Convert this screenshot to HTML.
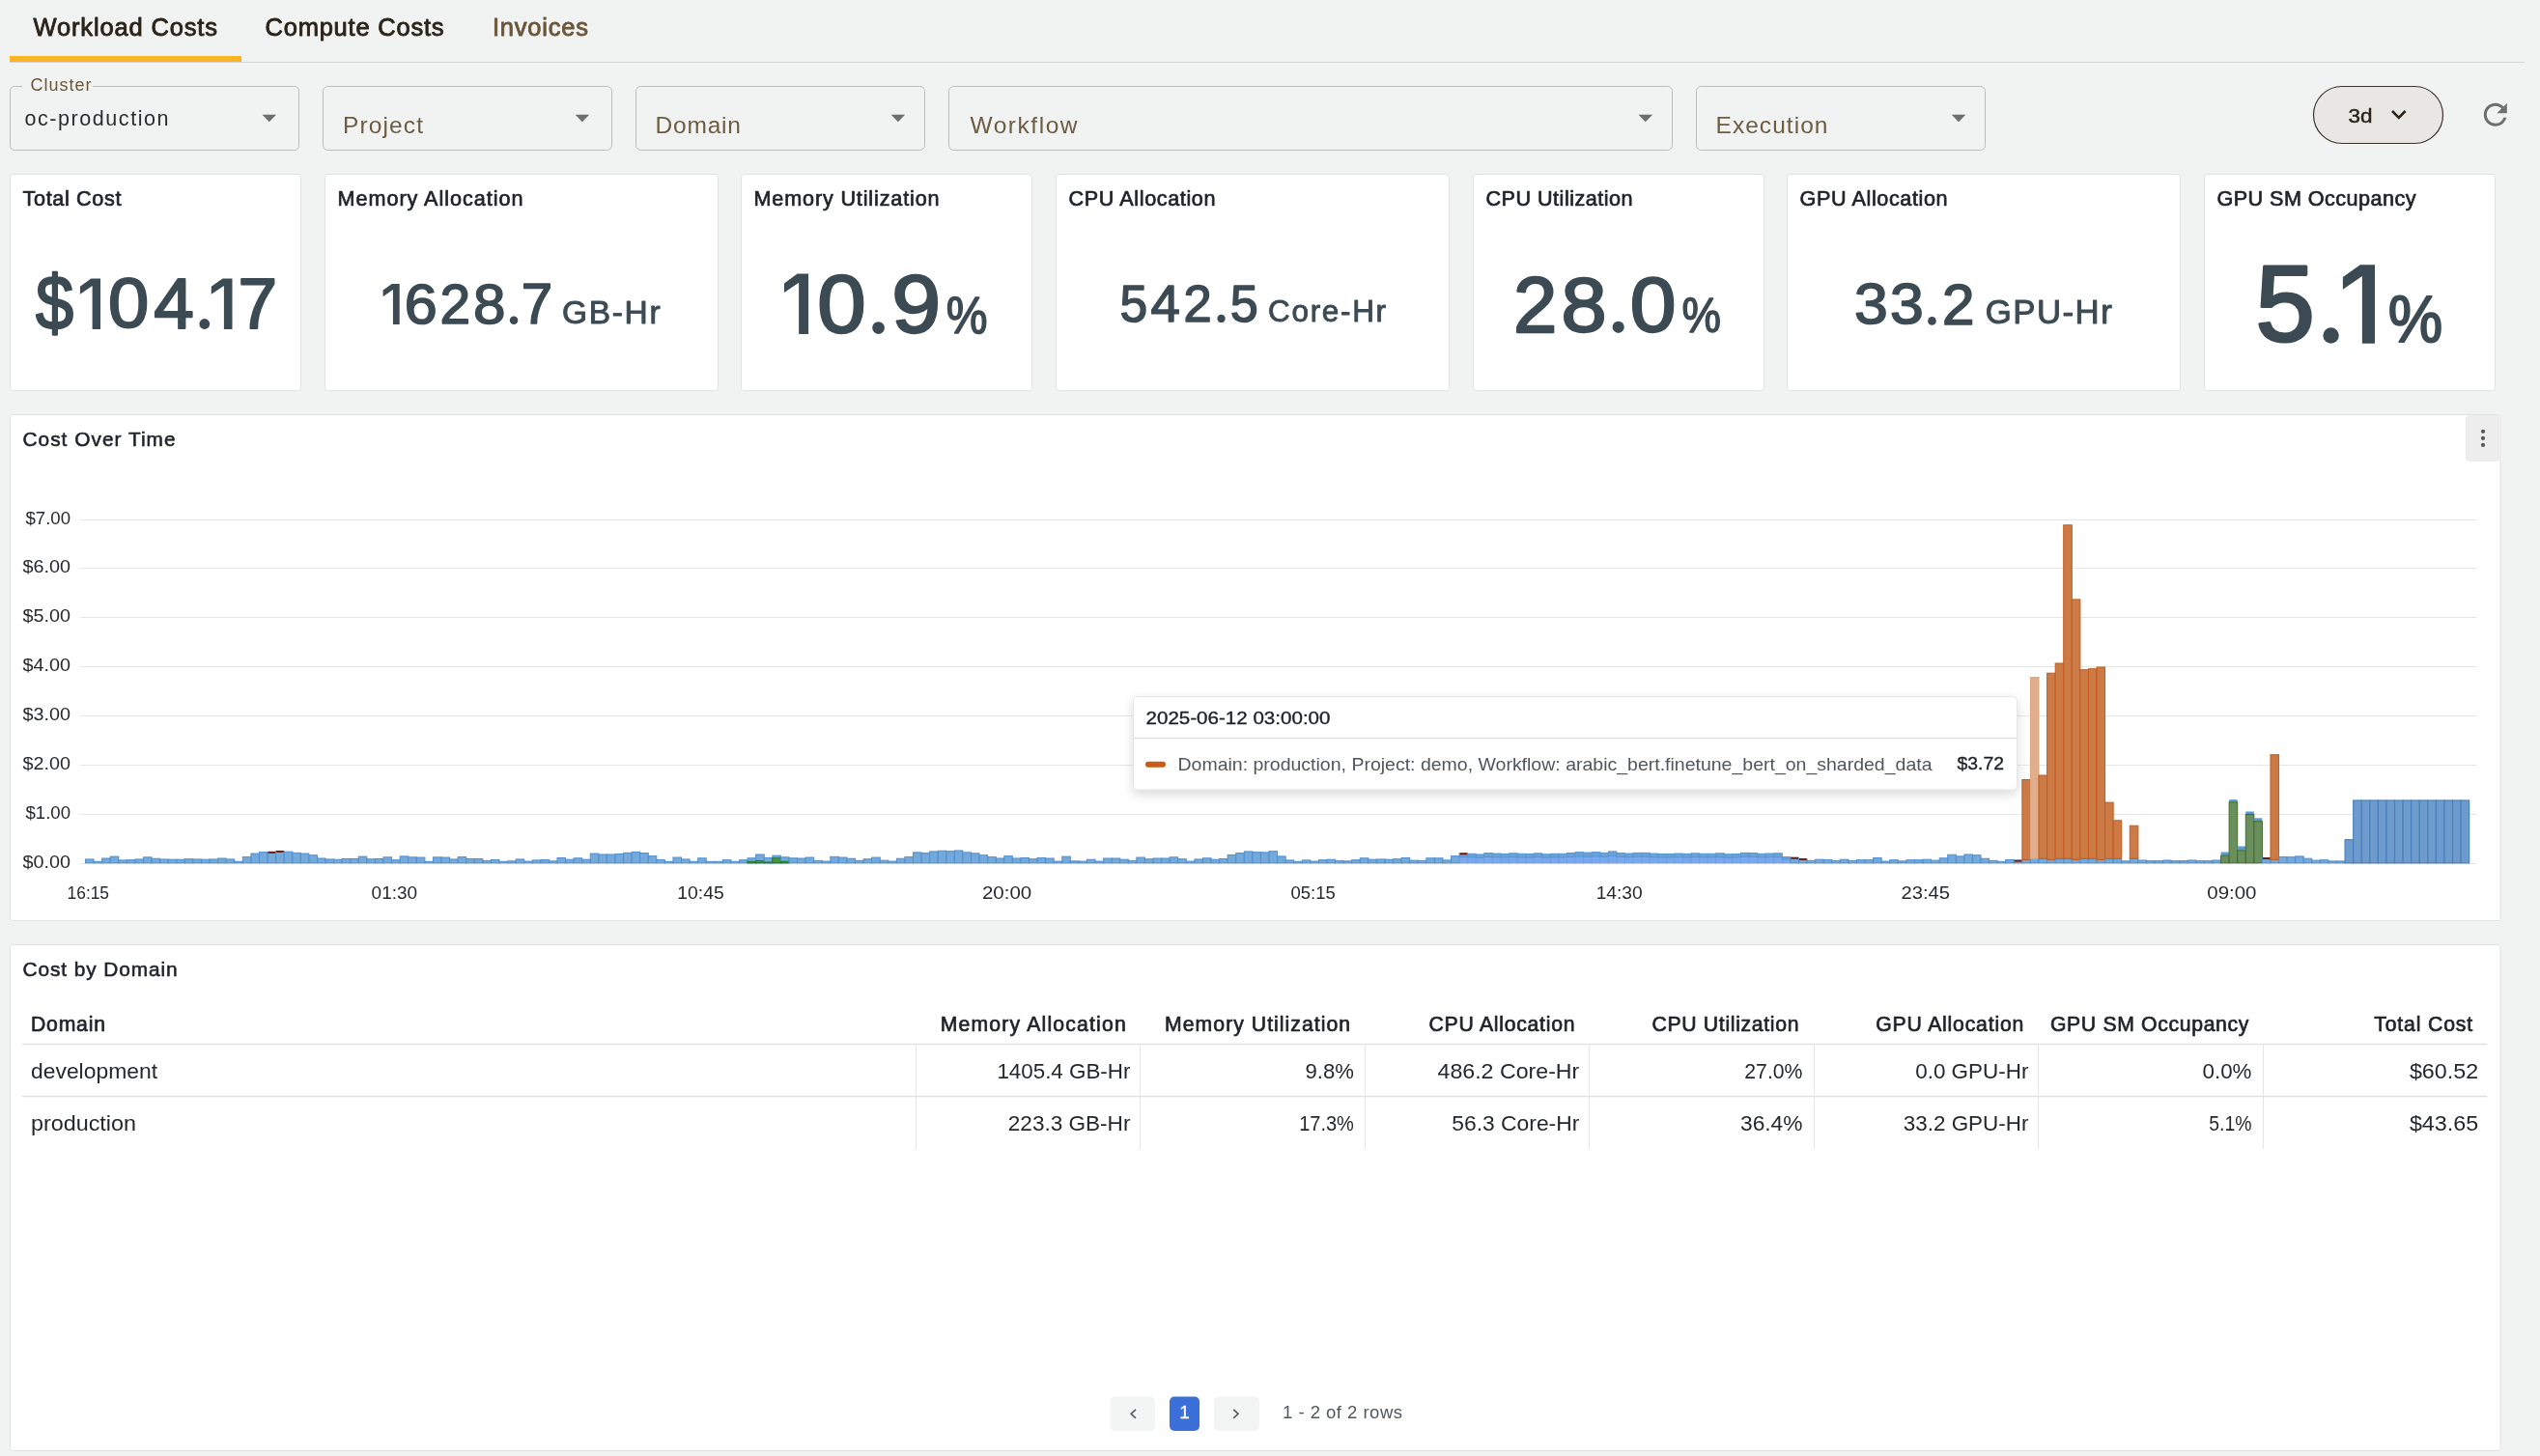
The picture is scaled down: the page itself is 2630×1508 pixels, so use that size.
<!DOCTYPE html>
<html><head><meta charset="utf-8"><title>Workload Costs</title>
<style>
html,body{margin:0;padding:0;background:#f1f3f2;width:2630px;height:1508px;overflow:hidden}
svg{display:block;font-family:"Liberation Sans", sans-serif;will-change:transform}
</style></head>
<body>
<svg width="2630" height="1508" viewBox="0 0 2630 1508">
<text x="34.5" y="36.5" font-size="25.5" fill="#2b2319" text-anchor="start" font-weight="normal" stroke="#2b2319" stroke-width="0.85" stroke-linejoin="round" textLength="190.5" lengthAdjust="spacing">Workload Costs</text>
<text x="274.5" y="36.5" font-size="25.5" fill="#2b2319" text-anchor="start" font-weight="normal" stroke="#2b2319" stroke-width="0.85" stroke-linejoin="round" textLength="185" lengthAdjust="spacing">Compute Costs</text>
<text x="510" y="36.5" font-size="25.5" fill="#6b5638" text-anchor="start" font-weight="normal" stroke="#6b5638" stroke-width="0.85" stroke-linejoin="round" textLength="99" lengthAdjust="spacing">Invoices</text>
<line x1="10" y1="64.5" x2="2614" y2="64.5" stroke="#d3d6d6" stroke-width="1"/>
<rect x="10" y="58" width="240" height="6" rx="0" fill="#fbb424"/>
<path d="M23 89.5 H15.5 Q10.5 89.5 10.5 94.5 V150.5 Q10.5 155.5 15.5 155.5 H304.5 Q309.5 155.5 309.5 150.5 V94.5 Q309.5 89.5 304.5 89.5 H96" fill="none" stroke="#b9bcbb" stroke-width="1"/>
<text x="31.5" y="94" font-size="18" fill="#6b5638" text-anchor="start" font-weight="normal" textLength="63" lengthAdjust="spacing">Cluster</text>
<text x="25.5" y="129.7" font-size="21.5" fill="#2a2d30" text-anchor="start" font-weight="normal" textLength="149" lengthAdjust="spacing">oc-production</text>
<path d="M271.5 118.8 L286.1 118.8 L278.8 126.3 Z" fill="#6e6e6e"/>
<rect x="334.5" y="89.5" width="299" height="66" rx="5" fill="none" stroke="#b9bcbb" stroke-width="1"/>
<text x="355.0" y="138.0" font-size="24.5" fill="#6e5c40" text-anchor="start" font-weight="normal" textLength="83" lengthAdjust="spacing">Project</text>
<path d="M595.6 118.8 L610.2 118.8 L602.9 126.3 Z" fill="#6e6e6e"/>
<rect x="658.5" y="89.5" width="299" height="66" rx="5" fill="none" stroke="#b9bcbb" stroke-width="1"/>
<text x="678.5" y="138.0" font-size="24.5" fill="#6e5c40" text-anchor="start" font-weight="normal" textLength="88.5" lengthAdjust="spacing">Domain</text>
<path d="M922.6 118.8 L937.2 118.8 L929.9 126.3 Z" fill="#6e6e6e"/>
<rect x="982.5" y="89.5" width="749" height="66" rx="5" fill="none" stroke="#b9bcbb" stroke-width="1"/>
<text x="1004.5" y="138.0" font-size="24.5" fill="#6e5c40" text-anchor="start" font-weight="normal" textLength="111" lengthAdjust="spacing">Workflow</text>
<path d="M1696.5 118.8 L1711.1 118.8 L1703.8 126.3 Z" fill="#6e6e6e"/>
<rect x="1756.5" y="89.5" width="299" height="66" rx="5" fill="none" stroke="#b9bcbb" stroke-width="1"/>
<text x="1776.5" y="138.0" font-size="24.5" fill="#6e5c40" text-anchor="start" font-weight="normal" textLength="116" lengthAdjust="spacing">Execution</text>
<path d="M2020.7 118.8 L2035.3 118.8 L2028.0 126.3 Z" fill="#6e6e6e"/>
<rect x="2395.5" y="89.5" width="134" height="59" rx="29.5" fill="#e9e7e3" stroke="#3a3229" stroke-width="1.2"/>
<text x="2431.5" y="127.3" font-size="21" fill="#2b2319" text-anchor="start" font-weight="normal" stroke="#2b2319" stroke-width="0.45" stroke-linejoin="round" textLength="25" lengthAdjust="spacingAndGlyphs">3d</text>
<path d="M2477 115 L2483.8 121.8 L2490.6 115" fill="none" stroke="#2b2319" stroke-width="2.6"/>
<g transform="translate(2565.8,100.85) scale(1.5)" fill="#6e6e6e"><path d="M17.65 6.35A7.958 7.958 0 0 0 12 4c-4.42 0-7.99 3.58-7.99 8s3.57 8 7.99 8c3.73 0 6.84-2.55 7.73-6h-2.08A5.99 5.99 0 0 1 12 18c-3.31 0-6-2.69-6-6s2.69-6 6-6c1.66 0 3.14.69 4.22 1.78L13 11h7V4l-2.35 2.35z"/></g>
<rect x="10.5" y="180.5" width="301" height="224" rx="3" fill="#ffffff" stroke="#e0e2e5" stroke-width="1"/>
<text x="23.5" y="213.2" font-size="21.6" fill="#1f2328" text-anchor="start" font-weight="normal" stroke="#1f2328" stroke-width="0.7" stroke-linejoin="round" textLength="102" lengthAdjust="spacing">Total Cost</text>
<rect x="336.5" y="180.5" width="407" height="224" rx="3" fill="#ffffff" stroke="#e0e2e5" stroke-width="1"/>
<text x="349.5" y="213.2" font-size="21.6" fill="#1f2328" text-anchor="start" font-weight="normal" stroke="#1f2328" stroke-width="0.7" stroke-linejoin="round" textLength="192" lengthAdjust="spacing">Memory Allocation</text>
<rect x="767.5" y="180.5" width="301" height="224" rx="3" fill="#ffffff" stroke="#e0e2e5" stroke-width="1"/>
<text x="780.5" y="213.2" font-size="21.6" fill="#1f2328" text-anchor="start" font-weight="normal" stroke="#1f2328" stroke-width="0.7" stroke-linejoin="round" textLength="192" lengthAdjust="spacing">Memory Utilization</text>
<rect x="1093.5" y="180.5" width="407" height="224" rx="3" fill="#ffffff" stroke="#e0e2e5" stroke-width="1"/>
<text x="1106.5" y="213.2" font-size="21.6" fill="#1f2328" text-anchor="start" font-weight="normal" stroke="#1f2328" stroke-width="0.7" stroke-linejoin="round" textLength="152" lengthAdjust="spacing">CPU Allocation</text>
<rect x="1525.5" y="180.5" width="301" height="224" rx="3" fill="#ffffff" stroke="#e0e2e5" stroke-width="1"/>
<text x="1538.5" y="213.2" font-size="21.6" fill="#1f2328" text-anchor="start" font-weight="normal" stroke="#1f2328" stroke-width="0.7" stroke-linejoin="round" textLength="152" lengthAdjust="spacing">CPU Utilization</text>
<rect x="1850.5" y="180.5" width="407" height="224" rx="3" fill="#ffffff" stroke="#e0e2e5" stroke-width="1"/>
<text x="1863.5" y="213.2" font-size="21.6" fill="#1f2328" text-anchor="start" font-weight="normal" stroke="#1f2328" stroke-width="0.7" stroke-linejoin="round" textLength="153" lengthAdjust="spacing">GPU Allocation</text>
<rect x="2282.5" y="180.5" width="301" height="224" rx="3" fill="#ffffff" stroke="#e0e2e5" stroke-width="1"/>
<text x="2295.5" y="213.2" font-size="21.6" fill="#1f2328" text-anchor="start" font-weight="normal" stroke="#1f2328" stroke-width="0.7" stroke-linejoin="round" textLength="206" lengthAdjust="spacing">GPU SM Occupancy</text>
<text x="0" y="0" font-size="80.23" fill="#3c4a53" stroke="#3c4a53" stroke-width="2.25" stroke-linejoin="round" transform="translate(36.93,341.31) scale(0.8767,1)">$</text>
<path d="M94.33 288.40 L104.00 288.40 L104.00 340.90 L95.62 340.90 L95.62 296.01 L82.90 304.81 L82.90 296.64Z" fill="#3c4a53"/>
<text x="0" y="0" font-size="71.33" fill="#3c4a53" stroke="#3c4a53" stroke-width="2.00" stroke-linejoin="round" transform="translate(111.90,339.20) scale(1.0638,1)">0</text>
<text x="0" y="0" font-size="73.33" fill="#3c4a53" stroke="#3c4a53" stroke-width="2.05" stroke-linejoin="round" transform="translate(159.13,339.87) scale(1.0179,1)">4</text>
<circle cx="211.80" cy="335.50" r="5.40" fill="#3c4a53"/>
<path d="M230.55 288.40 L240.50 288.40 L240.50 340.90 L231.89 340.90 L231.89 296.01 L218.80 304.81 L218.80 296.64Z" fill="#3c4a53"/>
<text x="0" y="0" font-size="73.33" fill="#3c4a53" stroke="#3c4a53" stroke-width="2.05" stroke-linejoin="round" transform="translate(246.38,339.87) scale(0.9947,1)">7</text>
<path d="M405.86 294.00 L413.70 294.00 L413.70 336.10 L406.91 336.10 L406.91 300.10 L396.60 307.16 L396.60 300.61Z" fill="#3c4a53"/>
<text x="0" y="0" font-size="57.20" fill="#3c4a53" stroke="#3c4a53" stroke-width="1.60" stroke-linejoin="round" transform="translate(418.75,334.74) scale(1.0680,1)">6</text>
<text x="0" y="0" font-size="57.97" fill="#3c4a53" stroke="#3c4a53" stroke-width="1.62" stroke-linejoin="round" transform="translate(455.54,335.29) scale(0.9810,1)">2</text>
<text x="0" y="0" font-size="57.20" fill="#3c4a53" stroke="#3c4a53" stroke-width="1.60" stroke-linejoin="round" transform="translate(490.03,334.74) scale(1.0513,1)">8</text>
<circle cx="532.05" cy="331.85" r="4.25" fill="#3c4a53"/>
<text x="0" y="0" font-size="58.80" fill="#3c4a53" stroke="#3c4a53" stroke-width="1.65" stroke-linejoin="round" transform="translate(539.63,335.28) scale(0.9903,1)">7</text>
<path d="M825.59 283.60 L837.10 283.60 L837.10 345.90 L827.14 345.90 L827.14 292.63 L812.00 303.07 L812.00 293.38Z" fill="#3c4a53"/>
<text x="0" y="0" font-size="84.65" fill="#3c4a53" stroke="#3c4a53" stroke-width="2.37" stroke-linejoin="round" transform="translate(846.13,343.89) scale(1.0693,1)">0</text>
<circle cx="909.55" cy="339.55" r="6.35" fill="#3c4a53"/>
<text x="0" y="0" font-size="84.65" fill="#3c4a53" stroke="#3c4a53" stroke-width="2.37" stroke-linejoin="round" transform="translate(923.29,343.89) scale(1.0803,1)">9</text>
<text x="0" y="0" font-size="53.04" fill="#3c4a53" stroke="#3c4a53" stroke-width="1.49" stroke-linejoin="round" transform="translate(979.66,345.45) scale(0.9071,1)">%</text>
<text x="0" y="0" font-size="53.32" fill="#3c4a53" stroke="#3c4a53" stroke-width="1.49" stroke-linejoin="round" transform="translate(1159.56,332.83) scale(0.9673,1)">5</text>
<text x="0" y="0" font-size="54.05" fill="#3c4a53" stroke="#3c4a53" stroke-width="1.51" stroke-linejoin="round" transform="translate(1191.41,333.34) scale(1.0087,1)">4</text>
<text x="0" y="0" font-size="53.29" fill="#3c4a53" stroke="#3c4a53" stroke-width="1.49" stroke-linejoin="round" transform="translate(1225.49,333.35) scale(0.9857,1)">2</text>
<circle cx="1264.55" cy="329.95" r="4.15" fill="#3c4a53"/>
<text x="0" y="0" font-size="53.32" fill="#3c4a53" stroke="#3c4a53" stroke-width="1.49" stroke-linejoin="round" transform="translate(1273.84,332.83) scale(0.9785,1)">5</text>
<text x="0" y="0" font-size="81.38" fill="#3c4a53" stroke="#3c4a53" stroke-width="2.28" stroke-linejoin="round" transform="translate(1567.04,343.76) scale(1.0012,1)">2</text>
<text x="0" y="0" font-size="80.30" fill="#3c4a53" stroke="#3c4a53" stroke-width="2.25" stroke-linejoin="round" transform="translate(1616.41,342.99) scale(1.0544,1)">8</text>
<circle cx="1675.70" cy="338.80" r="6.10" fill="#3c4a53"/>
<text x="0" y="0" font-size="80.30" fill="#3c4a53" stroke="#3c4a53" stroke-width="2.25" stroke-linejoin="round" transform="translate(1687.85,342.99) scale(1.0681,1)">0</text>
<text x="0" y="0" font-size="50.02" fill="#3c4a53" stroke="#3c4a53" stroke-width="1.40" stroke-linejoin="round" transform="translate(1741.51,344.31) scale(0.9099,1)">%</text>
<text x="0" y="0" font-size="59.24" fill="#3c4a53" stroke="#3c4a53" stroke-width="1.66" stroke-linejoin="round" transform="translate(1919.89,335.29) scale(1.0556,1)">3</text>
<text x="0" y="0" font-size="59.24" fill="#3c4a53" stroke="#3c4a53" stroke-width="1.66" stroke-linejoin="round" transform="translate(1956.99,335.29) scale(1.0556,1)">3</text>
<circle cx="2000.50" cy="332.40" r="4.30" fill="#3c4a53"/>
<text x="0" y="0" font-size="60.04" fill="#3c4a53" stroke="#3c4a53" stroke-width="1.68" stroke-linejoin="round" transform="translate(2011.12,335.86) scale(1.0024,1)">2</text>
<text x="0" y="0" font-size="112.16" fill="#3c4a53" stroke="#3c4a53" stroke-width="3.14" stroke-linejoin="round" transform="translate(2335.53,353.03) scale(0.9819,1)">5</text>
<circle cx="2413.60" cy="347.50" r="8.20" fill="#3c4a53"/>
<path d="M2443.82 274.30 L2459.00 274.30 L2459.00 355.70 L2445.86 355.70 L2445.86 286.10 L2425.90 299.74 L2425.90 287.08Z" fill="#3c4a53"/>
<text x="0" y="0" font-size="68.30" fill="#3c4a53" stroke="#3c4a53" stroke-width="1.91" stroke-linejoin="round" transform="translate(2472.63,354.34) scale(0.9295,1)">%</text>
<text x="582.0" y="334.9" font-size="33.54" fill="#3c4a53" text-anchor="start" font-weight="normal" stroke="#3c4a53" stroke-width="0.94" stroke-linejoin="round" textLength="101.6" lengthAdjust="spacing">GB-Hr</text>
<text x="1313.1" y="332.9" font-size="31.48" fill="#3c4a53" text-anchor="start" font-weight="normal" stroke="#3c4a53" stroke-width="0.88" stroke-linejoin="round" textLength="122.0" lengthAdjust="spacing">Core-Hr</text>
<text x="2055.7" y="335.3" font-size="34.78" fill="#3c4a53" text-anchor="start" font-weight="normal" stroke="#3c4a53" stroke-width="0.97" stroke-linejoin="round" textLength="131.1" lengthAdjust="spacing">GPU-Hr</text>
<rect x="10.5" y="429.5" width="2578.5" height="524" rx="3" fill="#ffffff" stroke="#e0e2e5" stroke-width="1"/>
<text x="23.5" y="461.6" font-size="20.8" fill="#1f2328" text-anchor="start" font-weight="normal" stroke="#1f2328" stroke-width="0.6" stroke-linejoin="round" textLength="158" lengthAdjust="spacing">Cost Over Time</text>
<rect x="2553" y="430" width="35.5" height="48" rx="4" fill="#ededed"/>
<circle cx="2571" cy="446.8" r="2.1" fill="#585858"/>
<circle cx="2571" cy="453.9" r="2.1" fill="#585858"/>
<circle cx="2571" cy="460.9" r="2.1" fill="#585858"/>
<line x1="82.5" y1="894.5" x2="2564.6" y2="894.5" stroke="#e6e6e6" stroke-width="1"/>
<text x="73" y="899.1" font-size="18" fill="#26292c" text-anchor="end" font-weight="normal" textLength="49.5" lengthAdjust="spacingAndGlyphs">$0.00</text>
<line x1="82.5" y1="843.5" x2="2564.6" y2="843.5" stroke="#e6e6e6" stroke-width="1"/>
<text x="73" y="848.1" font-size="18" fill="#26292c" text-anchor="end" font-weight="normal" textLength="46.5" lengthAdjust="spacingAndGlyphs">$1.00</text>
<line x1="82.5" y1="792.5" x2="2564.6" y2="792.5" stroke="#e6e6e6" stroke-width="1"/>
<text x="73" y="797.1" font-size="18" fill="#26292c" text-anchor="end" font-weight="normal" textLength="49.5" lengthAdjust="spacingAndGlyphs">$2.00</text>
<line x1="82.5" y1="741.5" x2="2564.6" y2="741.5" stroke="#e6e6e6" stroke-width="1"/>
<text x="73" y="746.1" font-size="18" fill="#26292c" text-anchor="end" font-weight="normal" textLength="49.5" lengthAdjust="spacingAndGlyphs">$3.00</text>
<line x1="82.5" y1="690.5" x2="2564.6" y2="690.5" stroke="#e6e6e6" stroke-width="1"/>
<text x="73" y="695.1" font-size="18" fill="#26292c" text-anchor="end" font-weight="normal" textLength="49.5" lengthAdjust="spacingAndGlyphs">$4.00</text>
<line x1="82.5" y1="639.5" x2="2564.6" y2="639.5" stroke="#e6e6e6" stroke-width="1"/>
<text x="73" y="644.1" font-size="18" fill="#26292c" text-anchor="end" font-weight="normal" textLength="49.5" lengthAdjust="spacingAndGlyphs">$5.00</text>
<line x1="82.5" y1="588.5" x2="2564.6" y2="588.5" stroke="#e6e6e6" stroke-width="1"/>
<text x="73" y="593.1" font-size="18" fill="#26292c" text-anchor="end" font-weight="normal" textLength="49.5" lengthAdjust="spacingAndGlyphs">$6.00</text>
<line x1="82.5" y1="538.5" x2="2564.6" y2="538.5" stroke="#e6e6e6" stroke-width="1"/>
<text x="73" y="543.1" font-size="18" fill="#26292c" text-anchor="end" font-weight="normal" textLength="46.5" lengthAdjust="spacingAndGlyphs">$7.00</text>
<text x="91.3" y="930.5" font-size="18" fill="#26292c" text-anchor="middle" font-weight="normal" textLength="43.400000000000006" lengthAdjust="spacingAndGlyphs">16:15</text>
<text x="408.38" y="930.5" font-size="18" fill="#26292c" text-anchor="middle" font-weight="normal" textLength="47.5" lengthAdjust="spacingAndGlyphs">01:30</text>
<text x="725.4599999999999" y="930.5" font-size="18" fill="#26292c" text-anchor="middle" font-weight="normal" textLength="48.400000000000006" lengthAdjust="spacingAndGlyphs">10:45</text>
<text x="1042.54" y="930.5" font-size="18" fill="#26292c" text-anchor="middle" font-weight="normal" textLength="51.2" lengthAdjust="spacingAndGlyphs">20:00</text>
<text x="1359.62" y="930.5" font-size="18" fill="#26292c" text-anchor="middle" font-weight="normal" textLength="46.300000000000004" lengthAdjust="spacingAndGlyphs">05:15</text>
<text x="1676.6999999999998" y="930.5" font-size="18" fill="#26292c" text-anchor="middle" font-weight="normal" textLength="48.0" lengthAdjust="spacingAndGlyphs">14:30</text>
<text x="1993.78" y="930.5" font-size="18" fill="#26292c" text-anchor="middle" font-weight="normal" textLength="50.5" lengthAdjust="spacingAndGlyphs">23:45</text>
<text x="2310.86" y="930.5" font-size="18" fill="#26292c" text-anchor="middle" font-weight="normal" textLength="51.1" lengthAdjust="spacingAndGlyphs">09:00</text>
<g>
<rect x="88.50" y="889.95" width="8.57" height="3.85" fill="#74a9db" stroke="#4e8fd0" stroke-width="1"/>
<rect x="97.07" y="892.30" width="8.57" height="1.50" fill="#74a9db" stroke="#4e8fd0" stroke-width="1"/>
<rect x="105.64" y="889.01" width="8.57" height="4.79" fill="#74a9db" stroke="#4e8fd0" stroke-width="1"/>
<rect x="114.21" y="887.12" width="8.57" height="6.68" fill="#74a9db" stroke="#4e8fd0" stroke-width="1"/>
<rect x="122.78" y="890.90" width="8.57" height="2.90" fill="#74a9db" stroke="#4e8fd0" stroke-width="1"/>
<rect x="131.35" y="890.66" width="8.57" height="3.14" fill="#74a9db" stroke="#4e8fd0" stroke-width="1"/>
<rect x="139.92" y="889.95" width="8.57" height="3.85" fill="#74a9db" stroke="#4e8fd0" stroke-width="1"/>
<rect x="148.49" y="887.83" width="8.57" height="5.97" fill="#74a9db" stroke="#4e8fd0" stroke-width="1"/>
<rect x="157.06" y="889.24" width="8.57" height="4.56" fill="#74a9db" stroke="#4e8fd0" stroke-width="1"/>
<rect x="165.63" y="889.95" width="8.57" height="3.85" fill="#74a9db" stroke="#4e8fd0" stroke-width="1"/>
<rect x="174.20" y="890.19" width="8.57" height="3.61" fill="#74a9db" stroke="#4e8fd0" stroke-width="1"/>
<rect x="182.77" y="890.19" width="8.57" height="3.61" fill="#74a9db" stroke="#4e8fd0" stroke-width="1"/>
<rect x="191.34" y="889.72" width="8.57" height="4.08" fill="#74a9db" stroke="#4e8fd0" stroke-width="1"/>
<rect x="199.91" y="889.95" width="8.57" height="3.85" fill="#74a9db" stroke="#4e8fd0" stroke-width="1"/>
<rect x="208.48" y="890.19" width="8.57" height="3.61" fill="#74a9db" stroke="#4e8fd0" stroke-width="1"/>
<rect x="217.05" y="889.95" width="8.57" height="3.85" fill="#74a9db" stroke="#4e8fd0" stroke-width="1"/>
<rect x="225.62" y="889.01" width="8.57" height="4.79" fill="#74a9db" stroke="#4e8fd0" stroke-width="1"/>
<rect x="234.19" y="889.95" width="8.57" height="3.85" fill="#74a9db" stroke="#4e8fd0" stroke-width="1"/>
<rect x="242.76" y="892.30" width="8.57" height="1.50" fill="#74a9db" stroke="#4e8fd0" stroke-width="1"/>
<rect x="251.33" y="887.59" width="8.57" height="6.21" fill="#74a9db" stroke="#4e8fd0" stroke-width="1"/>
<rect x="259.90" y="884.05" width="8.57" height="9.75" fill="#74a9db" stroke="#4e8fd0" stroke-width="1"/>
<rect x="268.47" y="882.63" width="8.57" height="11.17" fill="#74a9db" stroke="#4e8fd0" stroke-width="1"/>
<rect x="277.04" y="882.39" width="8.57" height="11.41" fill="#74a9db" stroke="#4e8fd0" stroke-width="1"/>
<rect x="277.54" y="881.89" width="7.57" height="2" fill="#6e1d0e"/>
<rect x="285.61" y="881.45" width="8.57" height="12.35" fill="#74a9db" stroke="#4e8fd0" stroke-width="1"/>
<rect x="286.11" y="880.95" width="7.57" height="2" fill="#6e1d0e"/>
<rect x="294.18" y="882.16" width="8.57" height="11.64" fill="#74a9db" stroke="#4e8fd0" stroke-width="1"/>
<rect x="302.75" y="883.34" width="8.57" height="10.46" fill="#74a9db" stroke="#4e8fd0" stroke-width="1"/>
<rect x="311.32" y="884.05" width="8.57" height="9.75" fill="#74a9db" stroke="#4e8fd0" stroke-width="1"/>
<rect x="319.89" y="885.70" width="8.57" height="8.10" fill="#74a9db" stroke="#4e8fd0" stroke-width="1"/>
<rect x="328.46" y="889.01" width="8.57" height="4.79" fill="#74a9db" stroke="#4e8fd0" stroke-width="1"/>
<rect x="337.03" y="889.95" width="8.57" height="3.85" fill="#74a9db" stroke="#4e8fd0" stroke-width="1"/>
<rect x="345.60" y="890.19" width="8.57" height="3.61" fill="#74a9db" stroke="#4e8fd0" stroke-width="1"/>
<rect x="354.17" y="889.48" width="8.57" height="4.32" fill="#74a9db" stroke="#4e8fd0" stroke-width="1"/>
<rect x="362.74" y="889.48" width="8.57" height="4.32" fill="#74a9db" stroke="#4e8fd0" stroke-width="1"/>
<rect x="371.31" y="887.12" width="8.57" height="6.68" fill="#74a9db" stroke="#4e8fd0" stroke-width="1"/>
<rect x="379.88" y="889.72" width="8.57" height="4.08" fill="#74a9db" stroke="#4e8fd0" stroke-width="1"/>
<rect x="388.45" y="889.48" width="8.57" height="4.32" fill="#74a9db" stroke="#4e8fd0" stroke-width="1"/>
<rect x="397.02" y="887.83" width="8.57" height="5.97" fill="#74a9db" stroke="#4e8fd0" stroke-width="1"/>
<rect x="405.59" y="890.66" width="8.57" height="3.14" fill="#74a9db" stroke="#4e8fd0" stroke-width="1"/>
<rect x="414.16" y="886.88" width="8.57" height="6.92" fill="#74a9db" stroke="#4e8fd0" stroke-width="1"/>
<rect x="422.73" y="887.83" width="8.57" height="5.97" fill="#74a9db" stroke="#4e8fd0" stroke-width="1"/>
<rect x="431.30" y="888.06" width="8.57" height="5.74" fill="#74a9db" stroke="#4e8fd0" stroke-width="1"/>
<rect x="439.87" y="892.30" width="8.57" height="1.50" fill="#74a9db" stroke="#4e8fd0" stroke-width="1"/>
<rect x="448.44" y="887.83" width="8.57" height="5.97" fill="#74a9db" stroke="#4e8fd0" stroke-width="1"/>
<rect x="457.01" y="888.06" width="8.57" height="5.74" fill="#74a9db" stroke="#4e8fd0" stroke-width="1"/>
<rect x="465.58" y="889.95" width="8.57" height="3.85" fill="#74a9db" stroke="#4e8fd0" stroke-width="1"/>
<rect x="474.15" y="887.59" width="8.57" height="6.21" fill="#74a9db" stroke="#4e8fd0" stroke-width="1"/>
<rect x="482.72" y="889.48" width="8.57" height="4.32" fill="#74a9db" stroke="#4e8fd0" stroke-width="1"/>
<rect x="491.29" y="889.48" width="8.57" height="4.32" fill="#74a9db" stroke="#4e8fd0" stroke-width="1"/>
<rect x="499.86" y="891.37" width="8.57" height="2.43" fill="#74a9db" stroke="#4e8fd0" stroke-width="1"/>
<rect x="508.43" y="890.42" width="8.57" height="3.38" fill="#74a9db" stroke="#4e8fd0" stroke-width="1"/>
<rect x="517.00" y="892.30" width="8.57" height="1.50" fill="#74a9db" stroke="#4e8fd0" stroke-width="1"/>
<rect x="525.57" y="891.84" width="8.57" height="1.96" fill="#74a9db" stroke="#4e8fd0" stroke-width="1"/>
<rect x="534.14" y="889.95" width="8.57" height="3.85" fill="#74a9db" stroke="#4e8fd0" stroke-width="1"/>
<rect x="542.71" y="892.08" width="8.57" height="1.72" fill="#74a9db" stroke="#4e8fd0" stroke-width="1"/>
<rect x="551.28" y="890.90" width="8.57" height="2.90" fill="#74a9db" stroke="#4e8fd0" stroke-width="1"/>
<rect x="559.85" y="890.42" width="8.57" height="3.38" fill="#74a9db" stroke="#4e8fd0" stroke-width="1"/>
<rect x="568.42" y="891.84" width="8.57" height="1.96" fill="#74a9db" stroke="#4e8fd0" stroke-width="1"/>
<rect x="576.99" y="888.53" width="8.57" height="5.27" fill="#74a9db" stroke="#4e8fd0" stroke-width="1"/>
<rect x="585.56" y="890.19" width="8.57" height="3.61" fill="#74a9db" stroke="#4e8fd0" stroke-width="1"/>
<rect x="594.13" y="888.77" width="8.57" height="5.03" fill="#74a9db" stroke="#4e8fd0" stroke-width="1"/>
<rect x="602.70" y="890.19" width="8.57" height="3.61" fill="#74a9db" stroke="#4e8fd0" stroke-width="1"/>
<rect x="611.27" y="884.05" width="8.57" height="9.75" fill="#74a9db" stroke="#4e8fd0" stroke-width="1"/>
<rect x="619.84" y="884.99" width="8.57" height="8.81" fill="#74a9db" stroke="#4e8fd0" stroke-width="1"/>
<rect x="628.41" y="884.99" width="8.57" height="8.81" fill="#74a9db" stroke="#4e8fd0" stroke-width="1"/>
<rect x="636.98" y="884.52" width="8.57" height="9.28" fill="#74a9db" stroke="#4e8fd0" stroke-width="1"/>
<rect x="645.55" y="883.34" width="8.57" height="10.46" fill="#74a9db" stroke="#4e8fd0" stroke-width="1"/>
<rect x="654.12" y="882.39" width="8.57" height="11.41" fill="#74a9db" stroke="#4e8fd0" stroke-width="1"/>
<rect x="662.69" y="883.57" width="8.57" height="10.23" fill="#74a9db" stroke="#4e8fd0" stroke-width="1"/>
<rect x="671.26" y="886.64" width="8.57" height="7.16" fill="#74a9db" stroke="#4e8fd0" stroke-width="1"/>
<rect x="679.83" y="890.42" width="8.57" height="3.38" fill="#74a9db" stroke="#4e8fd0" stroke-width="1"/>
<rect x="688.40" y="892.30" width="8.57" height="1.50" fill="#74a9db" stroke="#4e8fd0" stroke-width="1"/>
<rect x="696.97" y="888.06" width="8.57" height="5.74" fill="#74a9db" stroke="#4e8fd0" stroke-width="1"/>
<rect x="705.54" y="889.95" width="8.57" height="3.85" fill="#74a9db" stroke="#4e8fd0" stroke-width="1"/>
<rect x="714.11" y="892.30" width="8.57" height="1.50" fill="#74a9db" stroke="#4e8fd0" stroke-width="1"/>
<rect x="722.68" y="888.77" width="8.57" height="5.03" fill="#74a9db" stroke="#4e8fd0" stroke-width="1"/>
<rect x="731.25" y="892.30" width="8.57" height="1.50" fill="#74a9db" stroke="#4e8fd0" stroke-width="1"/>
<rect x="739.82" y="892.30" width="8.57" height="1.50" fill="#74a9db" stroke="#4e8fd0" stroke-width="1"/>
<rect x="748.39" y="890.66" width="8.57" height="3.14" fill="#74a9db" stroke="#4e8fd0" stroke-width="1"/>
<rect x="756.96" y="892.30" width="8.57" height="1.50" fill="#74a9db" stroke="#4e8fd0" stroke-width="1"/>
<rect x="765.53" y="890.66" width="8.57" height="3.14" fill="#74a9db" stroke="#4e8fd0" stroke-width="1"/>
<rect x="774.10" y="888.77" width="8.57" height="5.03" fill="#74a9db" stroke="#4e8fd0" stroke-width="1"/>
<rect x="774.10" y="892.30" width="8.57" height="1.50" fill="#4a9440" stroke="#1c7a1c" stroke-width="1"/>
<rect x="782.67" y="884.99" width="8.57" height="8.81" fill="#74a9db" stroke="#4e8fd0" stroke-width="1"/>
<rect x="782.67" y="891.60" width="8.57" height="2.20" fill="#4a9440" stroke="#1c7a1c" stroke-width="1"/>
<rect x="791.24" y="888.53" width="8.57" height="5.27" fill="#74a9db" stroke="#4e8fd0" stroke-width="1"/>
<rect x="791.24" y="893.00" width="8.57" height="0.80" fill="#4a9440" stroke="#1c7a1c" stroke-width="1"/>
<rect x="799.81" y="886.17" width="8.57" height="7.63" fill="#74a9db" stroke="#4e8fd0" stroke-width="1"/>
<rect x="799.81" y="888.80" width="8.57" height="5.00" fill="#4a9440" stroke="#1c7a1c" stroke-width="1"/>
<rect x="808.38" y="887.83" width="8.57" height="5.97" fill="#74a9db" stroke="#4e8fd0" stroke-width="1"/>
<rect x="808.38" y="892.30" width="8.57" height="1.50" fill="#4a9440" stroke="#1c7a1c" stroke-width="1"/>
<rect x="816.95" y="888.77" width="8.57" height="5.03" fill="#74a9db" stroke="#4e8fd0" stroke-width="1"/>
<rect x="825.52" y="889.01" width="8.57" height="4.79" fill="#74a9db" stroke="#4e8fd0" stroke-width="1"/>
<rect x="834.09" y="888.06" width="8.57" height="5.74" fill="#74a9db" stroke="#4e8fd0" stroke-width="1"/>
<rect x="842.66" y="891.37" width="8.57" height="2.43" fill="#74a9db" stroke="#4e8fd0" stroke-width="1"/>
<rect x="851.23" y="892.08" width="8.57" height="1.72" fill="#74a9db" stroke="#4e8fd0" stroke-width="1"/>
<rect x="859.80" y="887.35" width="8.57" height="6.45" fill="#74a9db" stroke="#4e8fd0" stroke-width="1"/>
<rect x="868.37" y="888.06" width="8.57" height="5.74" fill="#74a9db" stroke="#4e8fd0" stroke-width="1"/>
<rect x="876.94" y="889.24" width="8.57" height="4.56" fill="#74a9db" stroke="#4e8fd0" stroke-width="1"/>
<rect x="885.51" y="891.37" width="8.57" height="2.43" fill="#74a9db" stroke="#4e8fd0" stroke-width="1"/>
<rect x="894.08" y="889.72" width="8.57" height="4.08" fill="#74a9db" stroke="#4e8fd0" stroke-width="1"/>
<rect x="902.65" y="888.06" width="8.57" height="5.74" fill="#74a9db" stroke="#4e8fd0" stroke-width="1"/>
<rect x="911.22" y="891.13" width="8.57" height="2.67" fill="#74a9db" stroke="#4e8fd0" stroke-width="1"/>
<rect x="919.79" y="892.08" width="8.57" height="1.72" fill="#74a9db" stroke="#4e8fd0" stroke-width="1"/>
<rect x="928.36" y="889.24" width="8.57" height="4.56" fill="#74a9db" stroke="#4e8fd0" stroke-width="1"/>
<rect x="936.93" y="887.59" width="8.57" height="6.21" fill="#74a9db" stroke="#4e8fd0" stroke-width="1"/>
<rect x="945.50" y="882.86" width="8.57" height="10.94" fill="#74a9db" stroke="#4e8fd0" stroke-width="1"/>
<rect x="954.07" y="883.57" width="8.57" height="10.23" fill="#74a9db" stroke="#4e8fd0" stroke-width="1"/>
<rect x="962.64" y="881.92" width="8.57" height="11.88" fill="#74a9db" stroke="#4e8fd0" stroke-width="1"/>
<rect x="971.21" y="881.21" width="8.57" height="12.59" fill="#74a9db" stroke="#4e8fd0" stroke-width="1"/>
<rect x="979.78" y="881.68" width="8.57" height="12.12" fill="#74a9db" stroke="#4e8fd0" stroke-width="1"/>
<rect x="988.35" y="880.97" width="8.57" height="12.83" fill="#74a9db" stroke="#4e8fd0" stroke-width="1"/>
<rect x="996.92" y="882.86" width="8.57" height="10.94" fill="#74a9db" stroke="#4e8fd0" stroke-width="1"/>
<rect x="1005.49" y="883.81" width="8.57" height="9.99" fill="#74a9db" stroke="#4e8fd0" stroke-width="1"/>
<rect x="1014.06" y="885.70" width="8.57" height="8.10" fill="#74a9db" stroke="#4e8fd0" stroke-width="1"/>
<rect x="1022.63" y="887.59" width="8.57" height="6.21" fill="#74a9db" stroke="#4e8fd0" stroke-width="1"/>
<rect x="1031.20" y="889.01" width="8.57" height="4.79" fill="#74a9db" stroke="#4e8fd0" stroke-width="1"/>
<rect x="1039.77" y="886.64" width="8.57" height="7.16" fill="#74a9db" stroke="#4e8fd0" stroke-width="1"/>
<rect x="1048.34" y="889.01" width="8.57" height="4.79" fill="#74a9db" stroke="#4e8fd0" stroke-width="1"/>
<rect x="1056.91" y="888.53" width="8.57" height="5.27" fill="#74a9db" stroke="#4e8fd0" stroke-width="1"/>
<rect x="1065.48" y="889.72" width="8.57" height="4.08" fill="#74a9db" stroke="#4e8fd0" stroke-width="1"/>
<rect x="1074.05" y="888.53" width="8.57" height="5.27" fill="#74a9db" stroke="#4e8fd0" stroke-width="1"/>
<rect x="1082.62" y="889.01" width="8.57" height="4.79" fill="#74a9db" stroke="#4e8fd0" stroke-width="1"/>
<rect x="1091.19" y="892.08" width="8.57" height="1.72" fill="#74a9db" stroke="#4e8fd0" stroke-width="1"/>
<rect x="1099.76" y="887.12" width="8.57" height="6.68" fill="#74a9db" stroke="#4e8fd0" stroke-width="1"/>
<rect x="1108.33" y="891.84" width="8.57" height="1.96" fill="#74a9db" stroke="#4e8fd0" stroke-width="1"/>
<rect x="1116.90" y="892.08" width="8.57" height="1.72" fill="#74a9db" stroke="#4e8fd0" stroke-width="1"/>
<rect x="1125.47" y="890.19" width="8.57" height="3.61" fill="#74a9db" stroke="#4e8fd0" stroke-width="1"/>
<rect x="1134.04" y="892.08" width="8.57" height="1.72" fill="#74a9db" stroke="#4e8fd0" stroke-width="1"/>
<rect x="1142.61" y="889.01" width="8.57" height="4.79" fill="#74a9db" stroke="#4e8fd0" stroke-width="1"/>
<rect x="1151.18" y="889.01" width="8.57" height="4.79" fill="#74a9db" stroke="#4e8fd0" stroke-width="1"/>
<rect x="1159.75" y="890.19" width="8.57" height="3.61" fill="#74a9db" stroke="#4e8fd0" stroke-width="1"/>
<rect x="1168.32" y="891.37" width="8.57" height="2.43" fill="#74a9db" stroke="#4e8fd0" stroke-width="1"/>
<rect x="1176.89" y="888.06" width="8.57" height="5.74" fill="#74a9db" stroke="#4e8fd0" stroke-width="1"/>
<rect x="1185.46" y="889.72" width="8.57" height="4.08" fill="#74a9db" stroke="#4e8fd0" stroke-width="1"/>
<rect x="1194.03" y="889.01" width="8.57" height="4.79" fill="#74a9db" stroke="#4e8fd0" stroke-width="1"/>
<rect x="1202.60" y="889.01" width="8.57" height="4.79" fill="#74a9db" stroke="#4e8fd0" stroke-width="1"/>
<rect x="1211.17" y="887.83" width="8.57" height="5.97" fill="#74a9db" stroke="#4e8fd0" stroke-width="1"/>
<rect x="1219.74" y="889.72" width="8.57" height="4.08" fill="#74a9db" stroke="#4e8fd0" stroke-width="1"/>
<rect x="1228.31" y="892.08" width="8.57" height="1.72" fill="#74a9db" stroke="#4e8fd0" stroke-width="1"/>
<rect x="1236.88" y="889.95" width="8.57" height="3.85" fill="#74a9db" stroke="#4e8fd0" stroke-width="1"/>
<rect x="1245.45" y="888.77" width="8.57" height="5.03" fill="#74a9db" stroke="#4e8fd0" stroke-width="1"/>
<rect x="1254.02" y="890.19" width="8.57" height="3.61" fill="#74a9db" stroke="#4e8fd0" stroke-width="1"/>
<rect x="1262.59" y="889.48" width="8.57" height="4.32" fill="#74a9db" stroke="#4e8fd0" stroke-width="1"/>
<rect x="1271.16" y="885.46" width="8.57" height="8.34" fill="#74a9db" stroke="#4e8fd0" stroke-width="1"/>
<rect x="1279.73" y="883.57" width="8.57" height="10.23" fill="#74a9db" stroke="#4e8fd0" stroke-width="1"/>
<rect x="1288.30" y="881.92" width="8.57" height="11.88" fill="#74a9db" stroke="#4e8fd0" stroke-width="1"/>
<rect x="1296.87" y="882.63" width="8.57" height="11.17" fill="#74a9db" stroke="#4e8fd0" stroke-width="1"/>
<rect x="1305.44" y="882.86" width="8.57" height="10.94" fill="#74a9db" stroke="#4e8fd0" stroke-width="1"/>
<rect x="1314.01" y="881.68" width="8.57" height="12.12" fill="#74a9db" stroke="#4e8fd0" stroke-width="1"/>
<rect x="1322.58" y="886.88" width="8.57" height="6.92" fill="#74a9db" stroke="#4e8fd0" stroke-width="1"/>
<rect x="1331.15" y="890.90" width="8.57" height="2.90" fill="#74a9db" stroke="#4e8fd0" stroke-width="1"/>
<rect x="1339.72" y="892.30" width="8.57" height="1.50" fill="#74a9db" stroke="#4e8fd0" stroke-width="1"/>
<rect x="1348.29" y="890.90" width="8.57" height="2.90" fill="#74a9db" stroke="#4e8fd0" stroke-width="1"/>
<rect x="1356.86" y="892.08" width="8.57" height="1.72" fill="#74a9db" stroke="#4e8fd0" stroke-width="1"/>
<rect x="1365.43" y="890.66" width="8.57" height="3.14" fill="#74a9db" stroke="#4e8fd0" stroke-width="1"/>
<rect x="1374.00" y="890.19" width="8.57" height="3.61" fill="#74a9db" stroke="#4e8fd0" stroke-width="1"/>
<rect x="1382.57" y="891.37" width="8.57" height="2.43" fill="#74a9db" stroke="#4e8fd0" stroke-width="1"/>
<rect x="1391.14" y="891.84" width="8.57" height="1.96" fill="#74a9db" stroke="#4e8fd0" stroke-width="1"/>
<rect x="1399.71" y="890.66" width="8.57" height="3.14" fill="#74a9db" stroke="#4e8fd0" stroke-width="1"/>
<rect x="1408.28" y="888.77" width="8.57" height="5.03" fill="#74a9db" stroke="#4e8fd0" stroke-width="1"/>
<rect x="1416.85" y="890.19" width="8.57" height="3.61" fill="#74a9db" stroke="#4e8fd0" stroke-width="1"/>
<rect x="1425.42" y="889.95" width="8.57" height="3.85" fill="#74a9db" stroke="#4e8fd0" stroke-width="1"/>
<rect x="1433.99" y="890.19" width="8.57" height="3.61" fill="#74a9db" stroke="#4e8fd0" stroke-width="1"/>
<rect x="1442.56" y="889.72" width="8.57" height="4.08" fill="#74a9db" stroke="#4e8fd0" stroke-width="1"/>
<rect x="1451.13" y="888.53" width="8.57" height="5.27" fill="#74a9db" stroke="#4e8fd0" stroke-width="1"/>
<rect x="1459.70" y="891.13" width="8.57" height="2.67" fill="#74a9db" stroke="#4e8fd0" stroke-width="1"/>
<rect x="1468.27" y="891.37" width="8.57" height="2.43" fill="#74a9db" stroke="#4e8fd0" stroke-width="1"/>
<rect x="1476.84" y="888.77" width="8.57" height="5.03" fill="#74a9db" stroke="#4e8fd0" stroke-width="1"/>
<rect x="1485.41" y="888.77" width="8.57" height="5.03" fill="#74a9db" stroke="#4e8fd0" stroke-width="1"/>
<rect x="1493.98" y="890.90" width="8.57" height="2.90" fill="#74a9db" stroke="#4e8fd0" stroke-width="1"/>
<rect x="1502.55" y="886.64" width="8.57" height="7.16" fill="#74a9db" stroke="#4e8fd0" stroke-width="1"/>
<rect x="1511.12" y="887.61" width="8.57" height="6.19" fill="#7aa8f0" stroke="#6d9eeb" stroke-width="1"/>
<rect x="1511.12" y="883.81" width="8.57" height="3.80" fill="#6aa3d9" stroke="#5596d2" stroke-width="1"/>
<rect x="1511.62" y="883.31" width="7.57" height="2" fill="#6e1d0e"/>
<rect x="1519.69" y="887.90" width="8.57" height="5.90" fill="#7aa8f0" stroke="#6d9eeb" stroke-width="1"/>
<rect x="1519.69" y="884.28" width="8.57" height="3.62" fill="#6aa3d9" stroke="#5596d2" stroke-width="1"/>
<rect x="1528.26" y="888.34" width="8.57" height="5.46" fill="#7aa8f0" stroke="#6d9eeb" stroke-width="1"/>
<rect x="1528.26" y="884.99" width="8.57" height="3.35" fill="#6aa3d9" stroke="#5596d2" stroke-width="1"/>
<rect x="1536.83" y="887.46" width="8.57" height="6.34" fill="#7aa8f0" stroke="#6d9eeb" stroke-width="1"/>
<rect x="1536.83" y="883.57" width="8.57" height="3.89" fill="#6aa3d9" stroke="#5596d2" stroke-width="1"/>
<rect x="1545.40" y="887.75" width="8.57" height="6.05" fill="#7aa8f0" stroke="#6d9eeb" stroke-width="1"/>
<rect x="1545.40" y="884.05" width="8.57" height="3.71" fill="#6aa3d9" stroke="#5596d2" stroke-width="1"/>
<rect x="1553.97" y="888.05" width="8.57" height="5.75" fill="#7aa8f0" stroke="#6d9eeb" stroke-width="1"/>
<rect x="1553.97" y="884.52" width="8.57" height="3.53" fill="#6aa3d9" stroke="#5596d2" stroke-width="1"/>
<rect x="1562.54" y="887.61" width="8.57" height="6.19" fill="#7aa8f0" stroke="#6d9eeb" stroke-width="1"/>
<rect x="1562.54" y="883.81" width="8.57" height="3.80" fill="#6aa3d9" stroke="#5596d2" stroke-width="1"/>
<rect x="1571.11" y="887.90" width="8.57" height="5.90" fill="#7aa8f0" stroke="#6d9eeb" stroke-width="1"/>
<rect x="1571.11" y="884.28" width="8.57" height="3.62" fill="#6aa3d9" stroke="#5596d2" stroke-width="1"/>
<rect x="1579.68" y="888.05" width="8.57" height="5.75" fill="#7aa8f0" stroke="#6d9eeb" stroke-width="1"/>
<rect x="1579.68" y="884.52" width="8.57" height="3.53" fill="#6aa3d9" stroke="#5596d2" stroke-width="1"/>
<rect x="1588.25" y="887.61" width="8.57" height="6.19" fill="#7aa8f0" stroke="#6d9eeb" stroke-width="1"/>
<rect x="1588.25" y="883.81" width="8.57" height="3.80" fill="#6aa3d9" stroke="#5596d2" stroke-width="1"/>
<rect x="1596.82" y="888.19" width="8.57" height="5.61" fill="#7aa8f0" stroke="#6d9eeb" stroke-width="1"/>
<rect x="1596.82" y="884.75" width="8.57" height="3.44" fill="#6aa3d9" stroke="#5596d2" stroke-width="1"/>
<rect x="1605.39" y="887.90" width="8.57" height="5.90" fill="#7aa8f0" stroke="#6d9eeb" stroke-width="1"/>
<rect x="1605.39" y="884.28" width="8.57" height="3.62" fill="#6aa3d9" stroke="#5596d2" stroke-width="1"/>
<rect x="1613.96" y="887.90" width="8.57" height="5.90" fill="#7aa8f0" stroke="#6d9eeb" stroke-width="1"/>
<rect x="1613.96" y="884.28" width="8.57" height="3.62" fill="#6aa3d9" stroke="#5596d2" stroke-width="1"/>
<rect x="1622.53" y="887.46" width="8.57" height="6.34" fill="#7aa8f0" stroke="#6d9eeb" stroke-width="1"/>
<rect x="1622.53" y="883.57" width="8.57" height="3.89" fill="#6aa3d9" stroke="#5596d2" stroke-width="1"/>
<rect x="1631.10" y="886.87" width="8.57" height="6.93" fill="#7aa8f0" stroke="#6d9eeb" stroke-width="1"/>
<rect x="1631.10" y="882.63" width="8.57" height="4.25" fill="#6aa3d9" stroke="#5596d2" stroke-width="1"/>
<rect x="1639.67" y="887.17" width="8.57" height="6.63" fill="#7aa8f0" stroke="#6d9eeb" stroke-width="1"/>
<rect x="1639.67" y="883.10" width="8.57" height="4.07" fill="#6aa3d9" stroke="#5596d2" stroke-width="1"/>
<rect x="1648.24" y="886.87" width="8.57" height="6.93" fill="#7aa8f0" stroke="#6d9eeb" stroke-width="1"/>
<rect x="1648.24" y="882.63" width="8.57" height="4.25" fill="#6aa3d9" stroke="#5596d2" stroke-width="1"/>
<rect x="1656.81" y="887.31" width="8.57" height="6.49" fill="#7aa8f0" stroke="#6d9eeb" stroke-width="1"/>
<rect x="1656.81" y="883.34" width="8.57" height="3.98" fill="#6aa3d9" stroke="#5596d2" stroke-width="1"/>
<rect x="1665.38" y="886.43" width="8.57" height="7.37" fill="#7aa8f0" stroke="#6d9eeb" stroke-width="1"/>
<rect x="1665.38" y="881.92" width="8.57" height="4.51" fill="#6aa3d9" stroke="#5596d2" stroke-width="1"/>
<rect x="1673.95" y="887.46" width="8.57" height="6.34" fill="#7aa8f0" stroke="#6d9eeb" stroke-width="1"/>
<rect x="1673.95" y="883.57" width="8.57" height="3.89" fill="#6aa3d9" stroke="#5596d2" stroke-width="1"/>
<rect x="1682.52" y="887.75" width="8.57" height="6.05" fill="#7aa8f0" stroke="#6d9eeb" stroke-width="1"/>
<rect x="1682.52" y="884.05" width="8.57" height="3.71" fill="#6aa3d9" stroke="#5596d2" stroke-width="1"/>
<rect x="1691.09" y="887.31" width="8.57" height="6.49" fill="#7aa8f0" stroke="#6d9eeb" stroke-width="1"/>
<rect x="1691.09" y="883.34" width="8.57" height="3.98" fill="#6aa3d9" stroke="#5596d2" stroke-width="1"/>
<rect x="1699.66" y="887.31" width="8.57" height="6.49" fill="#7aa8f0" stroke="#6d9eeb" stroke-width="1"/>
<rect x="1699.66" y="883.34" width="8.57" height="3.98" fill="#6aa3d9" stroke="#5596d2" stroke-width="1"/>
<rect x="1708.23" y="887.75" width="8.57" height="6.05" fill="#7aa8f0" stroke="#6d9eeb" stroke-width="1"/>
<rect x="1708.23" y="884.05" width="8.57" height="3.71" fill="#6aa3d9" stroke="#5596d2" stroke-width="1"/>
<rect x="1716.80" y="888.05" width="8.57" height="5.75" fill="#7aa8f0" stroke="#6d9eeb" stroke-width="1"/>
<rect x="1716.80" y="884.52" width="8.57" height="3.53" fill="#6aa3d9" stroke="#5596d2" stroke-width="1"/>
<rect x="1725.37" y="888.05" width="8.57" height="5.75" fill="#7aa8f0" stroke="#6d9eeb" stroke-width="1"/>
<rect x="1725.37" y="884.52" width="8.57" height="3.53" fill="#6aa3d9" stroke="#5596d2" stroke-width="1"/>
<rect x="1733.94" y="887.75" width="8.57" height="6.05" fill="#7aa8f0" stroke="#6d9eeb" stroke-width="1"/>
<rect x="1733.94" y="884.05" width="8.57" height="3.71" fill="#6aa3d9" stroke="#5596d2" stroke-width="1"/>
<rect x="1742.51" y="888.05" width="8.57" height="5.75" fill="#7aa8f0" stroke="#6d9eeb" stroke-width="1"/>
<rect x="1742.51" y="884.52" width="8.57" height="3.53" fill="#6aa3d9" stroke="#5596d2" stroke-width="1"/>
<rect x="1751.08" y="887.61" width="8.57" height="6.19" fill="#7aa8f0" stroke="#6d9eeb" stroke-width="1"/>
<rect x="1751.08" y="883.81" width="8.57" height="3.80" fill="#6aa3d9" stroke="#5596d2" stroke-width="1"/>
<rect x="1759.65" y="887.90" width="8.57" height="5.90" fill="#7aa8f0" stroke="#6d9eeb" stroke-width="1"/>
<rect x="1759.65" y="884.28" width="8.57" height="3.62" fill="#6aa3d9" stroke="#5596d2" stroke-width="1"/>
<rect x="1768.22" y="887.90" width="8.57" height="5.90" fill="#7aa8f0" stroke="#6d9eeb" stroke-width="1"/>
<rect x="1768.22" y="884.28" width="8.57" height="3.62" fill="#6aa3d9" stroke="#5596d2" stroke-width="1"/>
<rect x="1776.79" y="887.61" width="8.57" height="6.19" fill="#7aa8f0" stroke="#6d9eeb" stroke-width="1"/>
<rect x="1776.79" y="883.81" width="8.57" height="3.80" fill="#6aa3d9" stroke="#5596d2" stroke-width="1"/>
<rect x="1785.36" y="888.19" width="8.57" height="5.61" fill="#7aa8f0" stroke="#6d9eeb" stroke-width="1"/>
<rect x="1785.36" y="884.75" width="8.57" height="3.44" fill="#6aa3d9" stroke="#5596d2" stroke-width="1"/>
<rect x="1793.93" y="888.05" width="8.57" height="5.75" fill="#7aa8f0" stroke="#6d9eeb" stroke-width="1"/>
<rect x="1793.93" y="884.52" width="8.57" height="3.53" fill="#6aa3d9" stroke="#5596d2" stroke-width="1"/>
<rect x="1802.50" y="887.31" width="8.57" height="6.49" fill="#7aa8f0" stroke="#6d9eeb" stroke-width="1"/>
<rect x="1802.50" y="883.34" width="8.57" height="3.98" fill="#6aa3d9" stroke="#5596d2" stroke-width="1"/>
<rect x="1811.07" y="887.46" width="8.57" height="6.34" fill="#7aa8f0" stroke="#6d9eeb" stroke-width="1"/>
<rect x="1811.07" y="883.57" width="8.57" height="3.89" fill="#6aa3d9" stroke="#5596d2" stroke-width="1"/>
<rect x="1819.64" y="887.90" width="8.57" height="5.90" fill="#7aa8f0" stroke="#6d9eeb" stroke-width="1"/>
<rect x="1819.64" y="884.28" width="8.57" height="3.62" fill="#6aa3d9" stroke="#5596d2" stroke-width="1"/>
<rect x="1828.21" y="887.75" width="8.57" height="6.05" fill="#7aa8f0" stroke="#6d9eeb" stroke-width="1"/>
<rect x="1828.21" y="884.05" width="8.57" height="3.71" fill="#6aa3d9" stroke="#5596d2" stroke-width="1"/>
<rect x="1836.78" y="887.61" width="8.57" height="6.19" fill="#7aa8f0" stroke="#6d9eeb" stroke-width="1"/>
<rect x="1836.78" y="883.81" width="8.57" height="3.80" fill="#6aa3d9" stroke="#5596d2" stroke-width="1"/>
<rect x="1845.35" y="889.95" width="8.57" height="3.85" fill="#7aa8f0" stroke="#6d9eeb" stroke-width="1"/>
<rect x="1845.35" y="887.59" width="8.57" height="2.36" fill="#6aa3d9" stroke="#5596d2" stroke-width="1"/>
<rect x="1853.92" y="888.30" width="8.57" height="5.50" fill="#74a9db" stroke="#4e8fd0" stroke-width="1"/>
<rect x="1854.42" y="887.80" width="7.57" height="2" fill="#6e1d0e"/>
<rect x="1862.49" y="889.48" width="8.57" height="4.32" fill="#74a9db" stroke="#4e8fd0" stroke-width="1"/>
<rect x="1862.99" y="888.98" width="7.57" height="2" fill="#6e1d0e"/>
<rect x="1871.06" y="891.37" width="8.57" height="2.43" fill="#74a9db" stroke="#4e8fd0" stroke-width="1"/>
<rect x="1879.63" y="890.19" width="8.57" height="3.61" fill="#74a9db" stroke="#4e8fd0" stroke-width="1"/>
<rect x="1888.20" y="890.42" width="8.57" height="3.38" fill="#74a9db" stroke="#4e8fd0" stroke-width="1"/>
<rect x="1896.77" y="891.37" width="8.57" height="2.43" fill="#74a9db" stroke="#4e8fd0" stroke-width="1"/>
<rect x="1905.34" y="890.19" width="8.57" height="3.61" fill="#74a9db" stroke="#4e8fd0" stroke-width="1"/>
<rect x="1913.91" y="891.37" width="8.57" height="2.43" fill="#74a9db" stroke="#4e8fd0" stroke-width="1"/>
<rect x="1922.48" y="890.66" width="8.57" height="3.14" fill="#74a9db" stroke="#4e8fd0" stroke-width="1"/>
<rect x="1931.05" y="890.66" width="8.57" height="3.14" fill="#74a9db" stroke="#4e8fd0" stroke-width="1"/>
<rect x="1939.62" y="888.53" width="8.57" height="5.27" fill="#74a9db" stroke="#4e8fd0" stroke-width="1"/>
<rect x="1948.19" y="892.08" width="8.57" height="1.72" fill="#74a9db" stroke="#4e8fd0" stroke-width="1"/>
<rect x="1956.76" y="890.66" width="8.57" height="3.14" fill="#74a9db" stroke="#4e8fd0" stroke-width="1"/>
<rect x="1965.33" y="891.84" width="8.57" height="1.96" fill="#74a9db" stroke="#4e8fd0" stroke-width="1"/>
<rect x="1973.90" y="890.66" width="8.57" height="3.14" fill="#74a9db" stroke="#4e8fd0" stroke-width="1"/>
<rect x="1982.47" y="890.66" width="8.57" height="3.14" fill="#74a9db" stroke="#4e8fd0" stroke-width="1"/>
<rect x="1991.04" y="890.19" width="8.57" height="3.61" fill="#74a9db" stroke="#4e8fd0" stroke-width="1"/>
<rect x="1999.61" y="891.13" width="8.57" height="2.67" fill="#74a9db" stroke="#4e8fd0" stroke-width="1"/>
<rect x="2008.18" y="888.77" width="8.57" height="5.03" fill="#74a9db" stroke="#4e8fd0" stroke-width="1"/>
<rect x="2016.75" y="885.23" width="8.57" height="8.57" fill="#74a9db" stroke="#4e8fd0" stroke-width="1"/>
<rect x="2025.32" y="886.88" width="8.57" height="6.92" fill="#74a9db" stroke="#4e8fd0" stroke-width="1"/>
<rect x="2033.89" y="884.99" width="8.57" height="8.81" fill="#74a9db" stroke="#4e8fd0" stroke-width="1"/>
<rect x="2042.46" y="885.70" width="8.57" height="8.10" fill="#74a9db" stroke="#4e8fd0" stroke-width="1"/>
<rect x="2051.03" y="889.24" width="8.57" height="4.56" fill="#74a9db" stroke="#4e8fd0" stroke-width="1"/>
<rect x="2059.60" y="891.37" width="8.57" height="2.43" fill="#74a9db" stroke="#4e8fd0" stroke-width="1"/>
<rect x="2068.17" y="892.30" width="8.57" height="1.50" fill="#74a9db" stroke="#4e8fd0" stroke-width="1"/>
<rect x="2076.74" y="890.42" width="8.57" height="3.38" fill="#74a9db" stroke="#4e8fd0" stroke-width="1"/>
<rect x="2085.31" y="891.13" width="8.57" height="2.67" fill="#74a9db" stroke="#4e8fd0" stroke-width="1"/>
<rect x="2085.81" y="890.63" width="7.57" height="2" fill="#6e1d0e"/>
<rect x="2093.88" y="890.30" width="8.57" height="3.50" fill="#74a9db" stroke="#4e8fd0" stroke-width="1"/>
<rect x="2093.88" y="807.50" width="8.57" height="82.80" fill="#cc7b47" stroke="#c45a1a" stroke-width="1"/>
<rect x="2102.45" y="889.30" width="8.57" height="4.50" fill="#74a9db" stroke="#4e8fd0" stroke-width="1"/>
<rect x="2102.45" y="701.50" width="8.57" height="187.80" fill="#dfae8c" stroke="#e2a27c" stroke-width="1"/>
<rect x="2111.02" y="889.30" width="8.57" height="4.50" fill="#74a9db" stroke="#4e8fd0" stroke-width="1"/>
<rect x="2111.02" y="803.00" width="8.57" height="86.30" fill="#cc7b47" stroke="#c45a1a" stroke-width="1"/>
<rect x="2119.59" y="890.30" width="8.57" height="3.50" fill="#74a9db" stroke="#4e8fd0" stroke-width="1"/>
<rect x="2119.59" y="697.20" width="8.57" height="193.10" fill="#cc7b47" stroke="#c45a1a" stroke-width="1"/>
<rect x="2128.16" y="889.30" width="8.57" height="4.50" fill="#74a9db" stroke="#4e8fd0" stroke-width="1"/>
<rect x="2128.16" y="687.00" width="8.57" height="202.30" fill="#cc7b47" stroke="#c45a1a" stroke-width="1"/>
<rect x="2136.73" y="889.30" width="8.57" height="4.50" fill="#74a9db" stroke="#4e8fd0" stroke-width="1"/>
<rect x="2136.73" y="543.80" width="8.57" height="345.50" fill="#cc7b47" stroke="#c45a1a" stroke-width="1"/>
<rect x="2145.30" y="890.30" width="8.57" height="3.50" fill="#74a9db" stroke="#4e8fd0" stroke-width="1"/>
<rect x="2145.30" y="620.90" width="8.57" height="269.40" fill="#cc7b47" stroke="#c45a1a" stroke-width="1"/>
<rect x="2153.87" y="889.30" width="8.57" height="4.50" fill="#74a9db" stroke="#4e8fd0" stroke-width="1"/>
<rect x="2153.87" y="693.70" width="8.57" height="195.60" fill="#cc7b47" stroke="#c45a1a" stroke-width="1"/>
<rect x="2162.44" y="889.30" width="8.57" height="4.50" fill="#74a9db" stroke="#4e8fd0" stroke-width="1"/>
<rect x="2162.44" y="692.70" width="8.57" height="196.60" fill="#cc7b47" stroke="#c45a1a" stroke-width="1"/>
<rect x="2171.01" y="890.30" width="8.57" height="3.50" fill="#74a9db" stroke="#4e8fd0" stroke-width="1"/>
<rect x="2171.01" y="691.00" width="8.57" height="199.30" fill="#cc7b47" stroke="#c45a1a" stroke-width="1"/>
<rect x="2179.58" y="889.30" width="8.57" height="4.50" fill="#74a9db" stroke="#4e8fd0" stroke-width="1"/>
<rect x="2179.58" y="831.10" width="8.57" height="58.20" fill="#cc7b47" stroke="#c45a1a" stroke-width="1"/>
<rect x="2188.15" y="889.30" width="8.57" height="4.50" fill="#74a9db" stroke="#4e8fd0" stroke-width="1"/>
<rect x="2188.15" y="849.80" width="8.57" height="39.50" fill="#cc7b47" stroke="#c45a1a" stroke-width="1"/>
<rect x="2196.72" y="891.80" width="8.57" height="2.00" fill="#74a9db" stroke="#4e8fd0" stroke-width="1"/>
<rect x="2205.29" y="889.30" width="8.57" height="4.50" fill="#74a9db" stroke="#4e8fd0" stroke-width="1"/>
<rect x="2205.29" y="855.20" width="8.57" height="34.10" fill="#cc7b47" stroke="#c45a1a" stroke-width="1"/>
<rect x="2213.86" y="891.00" width="8.57" height="2.80" fill="#74a9db" stroke="#4e8fd0" stroke-width="1"/>
<rect x="2222.43" y="891.60" width="8.57" height="2.20" fill="#74a9db" stroke="#4e8fd0" stroke-width="1"/>
<rect x="2231.00" y="891.60" width="8.57" height="2.20" fill="#74a9db" stroke="#4e8fd0" stroke-width="1"/>
<rect x="2239.57" y="891.00" width="8.57" height="2.80" fill="#74a9db" stroke="#4e8fd0" stroke-width="1"/>
<rect x="2248.14" y="891.60" width="8.57" height="2.20" fill="#74a9db" stroke="#4e8fd0" stroke-width="1"/>
<rect x="2256.71" y="891.60" width="8.57" height="2.20" fill="#74a9db" stroke="#4e8fd0" stroke-width="1"/>
<rect x="2265.28" y="891.00" width="8.57" height="2.80" fill="#74a9db" stroke="#4e8fd0" stroke-width="1"/>
<rect x="2273.85" y="891.60" width="8.57" height="2.20" fill="#74a9db" stroke="#4e8fd0" stroke-width="1"/>
<rect x="2282.42" y="891.60" width="8.57" height="2.20" fill="#74a9db" stroke="#4e8fd0" stroke-width="1"/>
<rect x="2290.99" y="891.00" width="8.57" height="2.80" fill="#74a9db" stroke="#4e8fd0" stroke-width="1"/>
<rect x="2299.56" y="882.50" width="8.57" height="3.70" fill="#5b9bd5"/>
<rect x="2299.56" y="886.20" width="8.57" height="7.60" fill="#6a8f5c" stroke="#3f6b2e" stroke-width="1"/>
<rect x="2308.13" y="828.10" width="8.57" height="2.70" fill="#5b9bd5"/>
<rect x="2308.13" y="830.80" width="8.57" height="63.00" fill="#6a8f5c" stroke="#3f6b2e" stroke-width="1"/>
<rect x="2316.70" y="876.50" width="8.57" height="4.40" fill="#5b9bd5"/>
<rect x="2316.70" y="880.90" width="8.57" height="12.90" fill="#6a8f5c" stroke="#3f6b2e" stroke-width="1"/>
<rect x="2325.27" y="840.50" width="8.57" height="3.00" fill="#5b9bd5"/>
<rect x="2325.27" y="843.50" width="8.57" height="50.30" fill="#6a8f5c" stroke="#3f6b2e" stroke-width="1"/>
<rect x="2333.84" y="847.30" width="8.57" height="3.40" fill="#5b9bd5"/>
<rect x="2333.84" y="850.70" width="8.57" height="43.10" fill="#6a8f5c" stroke="#3f6b2e" stroke-width="1"/>
<rect x="2342.41" y="888.50" width="8.57" height="5.30" fill="#74a9db" stroke="#4e8fd0" stroke-width="1"/>
<rect x="2342.91" y="888.00" width="7.57" height="2" fill="#6e1d0e"/>
<rect x="2350.98" y="890.30" width="8.57" height="3.50" fill="#74a9db" stroke="#4e8fd0" stroke-width="1"/>
<rect x="2350.98" y="781.70" width="8.57" height="108.60" fill="#cc7b47" stroke="#c45a1a" stroke-width="1"/>
<rect x="2359.55" y="887.40" width="8.57" height="6.40" fill="#74a9db" stroke="#4e8fd0" stroke-width="1"/>
<rect x="2368.12" y="887.70" width="8.57" height="6.10" fill="#74a9db" stroke="#4e8fd0" stroke-width="1"/>
<rect x="2376.69" y="886.90" width="8.57" height="6.90" fill="#74a9db" stroke="#4e8fd0" stroke-width="1"/>
<rect x="2385.26" y="889.20" width="8.57" height="4.60" fill="#74a9db" stroke="#4e8fd0" stroke-width="1"/>
<rect x="2393.83" y="891.10" width="8.57" height="2.70" fill="#74a9db" stroke="#4e8fd0" stroke-width="1"/>
<rect x="2402.40" y="890.70" width="8.57" height="3.10" fill="#74a9db" stroke="#4e8fd0" stroke-width="1"/>
<rect x="2410.97" y="891.90" width="8.57" height="1.90" fill="#74a9db" stroke="#4e8fd0" stroke-width="1"/>
<rect x="2419.54" y="891.90" width="8.57" height="1.90" fill="#74a9db" stroke="#4e8fd0" stroke-width="1"/>
<rect x="2428.11" y="869.70" width="8.57" height="24.10" fill="#6c9bcc" stroke="#4a80c0" stroke-width="1.2"/>
<rect x="2436.68" y="829.00" width="8.57" height="64.80" fill="#6c9bcc" stroke="#4a80c0" stroke-width="1.2"/>
<rect x="2445.25" y="829.00" width="8.57" height="64.80" fill="#6c9bcc" stroke="#4a80c0" stroke-width="1.2"/>
<rect x="2453.82" y="829.00" width="8.57" height="64.80" fill="#6c9bcc" stroke="#4a80c0" stroke-width="1.2"/>
<rect x="2462.39" y="829.00" width="8.57" height="64.80" fill="#6c9bcc" stroke="#4a80c0" stroke-width="1.2"/>
<rect x="2470.96" y="829.00" width="8.57" height="64.80" fill="#6c9bcc" stroke="#4a80c0" stroke-width="1.2"/>
<rect x="2479.53" y="829.00" width="8.57" height="64.80" fill="#6c9bcc" stroke="#4a80c0" stroke-width="1.2"/>
<rect x="2488.10" y="829.00" width="8.57" height="64.80" fill="#6c9bcc" stroke="#4a80c0" stroke-width="1.2"/>
<rect x="2496.67" y="829.00" width="8.57" height="64.80" fill="#6c9bcc" stroke="#4a80c0" stroke-width="1.2"/>
<rect x="2505.24" y="829.00" width="8.57" height="64.80" fill="#6c9bcc" stroke="#4a80c0" stroke-width="1.2"/>
<rect x="2513.81" y="829.00" width="8.57" height="64.80" fill="#6c9bcc" stroke="#4a80c0" stroke-width="1.2"/>
<rect x="2522.38" y="829.00" width="8.57" height="64.80" fill="#6c9bcc" stroke="#4a80c0" stroke-width="1.2"/>
<rect x="2530.95" y="829.00" width="8.57" height="64.80" fill="#6c9bcc" stroke="#4a80c0" stroke-width="1.2"/>
<rect x="2539.52" y="829.00" width="8.57" height="64.80" fill="#6c9bcc" stroke="#4a80c0" stroke-width="1.2"/>
<rect x="2548.09" y="829.00" width="8.57" height="64.80" fill="#6c9bcc" stroke="#4a80c0" stroke-width="1.2"/>
</g>
<defs><filter id="sh" x="-5%" y="-30%" width="110%" height="170%"><feDropShadow dx="0" dy="4" stdDeviation="6" flood-color="#000" flood-opacity="0.16"/></filter></defs>
<rect x="1173.5" y="721.5" width="915" height="96.5" rx="4" fill="#ffffff" filter="url(#sh)"/>
<rect x="1173.5" y="721.5" width="915" height="96.5" rx="4" fill="none" stroke="#e4e6e8" stroke-width="1"/>
<line x1="1174" y1="764.5" x2="2088" y2="764.5" stroke="#dde0e2" stroke-width="1.5"/>
<text x="1186.5" y="750.4" font-size="18.5" fill="#1d2024" text-anchor="start" font-weight="normal" stroke="#1d2024" stroke-width="0.35" stroke-linejoin="round" textLength="191" lengthAdjust="spacingAndGlyphs">2025-06-12 03:00:00</text>
<rect x="1186" y="788.7" width="21" height="6" rx="3" fill="#c65d1a"/>
<text x="1219.5" y="798" font-size="18.5" fill="#50565c" text-anchor="start" font-weight="normal" textLength="781" lengthAdjust="spacingAndGlyphs">Domain: production, Project: demo, Workflow: arabic_bert.finetune_bert_on_sharded_data</text>
<text x="2026.5" y="797.4" font-size="18.5" fill="#1d2024" text-anchor="start" font-weight="normal" stroke="#1d2024" stroke-width="0.35" stroke-linejoin="round" textLength="48.5" lengthAdjust="spacingAndGlyphs">$3.72</text>
<rect x="10.5" y="978.5" width="2578.5" height="524" rx="3" fill="#ffffff" stroke="#e0e2e5" stroke-width="1"/>
<text x="23.5" y="1010.8" font-size="20.8" fill="#1f2328" text-anchor="start" font-weight="normal" stroke="#1f2328" stroke-width="0.6" stroke-linejoin="round" textLength="160" lengthAdjust="spacing">Cost by Domain</text>
<line x1="23" y1="1081.5" x2="2575.3" y2="1081.5" stroke="#dfe1e2" stroke-width="1.5"/>
<line x1="23" y1="1135.5" x2="2575.3" y2="1135.5" stroke="#dfe1e2" stroke-width="1.5"/>
<line x1="948.5" y1="1082" x2="948.5" y2="1190" stroke="#e3e5e6" stroke-width="1"/>
<line x1="1180.5" y1="1082" x2="1180.5" y2="1190" stroke="#e3e5e6" stroke-width="1"/>
<line x1="1413.5" y1="1082" x2="1413.5" y2="1190" stroke="#e3e5e6" stroke-width="1"/>
<line x1="1645.5" y1="1082" x2="1645.5" y2="1190" stroke="#e3e5e6" stroke-width="1"/>
<line x1="1878.5" y1="1082" x2="1878.5" y2="1190" stroke="#e3e5e6" stroke-width="1"/>
<line x1="2110.5" y1="1082" x2="2110.5" y2="1190" stroke="#e3e5e6" stroke-width="1"/>
<line x1="2343.5" y1="1082" x2="2343.5" y2="1190" stroke="#e3e5e6" stroke-width="1"/>
<text x="32" y="1068.1" font-size="21.2" fill="#1f2328" text-anchor="start" font-weight="normal" stroke="#1f2328" stroke-width="0.7" stroke-linejoin="round" textLength="77" lengthAdjust="spacing">Domain</text>
<text x="1165.7" y="1068.1" font-size="21.2" fill="#1f2328" text-anchor="end" font-weight="normal" stroke="#1f2328" stroke-width="0.7" stroke-linejoin="round" textLength="192" lengthAdjust="spacing">Memory Allocation</text>
<text x="1398.1" y="1068.1" font-size="21.2" fill="#1f2328" text-anchor="end" font-weight="normal" stroke="#1f2328" stroke-width="0.7" stroke-linejoin="round" textLength="192" lengthAdjust="spacing">Memory Utilization</text>
<text x="1630.5" y="1068.1" font-size="21.2" fill="#1f2328" text-anchor="end" font-weight="normal" stroke="#1f2328" stroke-width="0.7" stroke-linejoin="round" textLength="151" lengthAdjust="spacing">CPU Allocation</text>
<text x="1862.5" y="1068.1" font-size="21.2" fill="#1f2328" text-anchor="end" font-weight="normal" stroke="#1f2328" stroke-width="0.7" stroke-linejoin="round" textLength="152" lengthAdjust="spacing">CPU Utilization</text>
<text x="2095.3" y="1068.1" font-size="21.2" fill="#1f2328" text-anchor="end" font-weight="normal" stroke="#1f2328" stroke-width="0.7" stroke-linejoin="round" textLength="153" lengthAdjust="spacing">GPU Allocation</text>
<text x="2328.4" y="1068.1" font-size="21.2" fill="#1f2328" text-anchor="end" font-weight="normal" stroke="#1f2328" stroke-width="0.7" stroke-linejoin="round" textLength="205.5" lengthAdjust="spacing">GPU SM Occupancy</text>
<text x="2560.2" y="1068.1" font-size="21.2" fill="#1f2328" text-anchor="end" font-weight="normal" stroke="#1f2328" stroke-width="0.7" stroke-linejoin="round" textLength="102" lengthAdjust="spacing">Total Cost</text>
<text x="32" y="1116.6" font-size="21.5" fill="#25282b" text-anchor="start" font-weight="normal" textLength="131" lengthAdjust="spacingAndGlyphs">development</text>
<text x="1170.4" y="1116.6" font-size="21.5" fill="#25282b" text-anchor="end" font-weight="normal" textLength="138" lengthAdjust="spacingAndGlyphs">1405.4 GB-Hr</text>
<text x="1401.9" y="1116.6" font-size="21.5" fill="#25282b" text-anchor="end" font-weight="normal" textLength="50.4" lengthAdjust="spacingAndGlyphs">9.8%</text>
<text x="1635.3" y="1116.6" font-size="21.5" fill="#25282b" text-anchor="end" font-weight="normal" textLength="146.8" lengthAdjust="spacingAndGlyphs">486.2 Core-Hr</text>
<text x="1866.5" y="1116.6" font-size="21.5" fill="#25282b" text-anchor="end" font-weight="normal" textLength="60.2" lengthAdjust="spacingAndGlyphs">27.0%</text>
<text x="2100.4" y="1116.6" font-size="21.5" fill="#25282b" text-anchor="end" font-weight="normal" textLength="117.2" lengthAdjust="spacingAndGlyphs">0.0 GPU-Hr</text>
<text x="2331.5" y="1116.6" font-size="21.5" fill="#25282b" text-anchor="end" font-weight="normal" textLength="51" lengthAdjust="spacingAndGlyphs">0.0%</text>
<text x="2566.1" y="1116.6" font-size="21.5" fill="#25282b" text-anchor="end" font-weight="normal" textLength="71.2" lengthAdjust="spacingAndGlyphs">$60.52</text>
<text x="32" y="1170.8" font-size="21.5" fill="#25282b" text-anchor="start" font-weight="normal" textLength="109" lengthAdjust="spacingAndGlyphs">production</text>
<text x="1170.4" y="1170.8" font-size="21.5" fill="#25282b" text-anchor="end" font-weight="normal" textLength="126.6" lengthAdjust="spacingAndGlyphs">223.3 GB-Hr</text>
<text x="1401.9" y="1170.8" font-size="21.5" fill="#25282b" text-anchor="end" font-weight="normal" textLength="56.7" lengthAdjust="spacingAndGlyphs">17.3%</text>
<text x="1635.3" y="1170.8" font-size="21.5" fill="#25282b" text-anchor="end" font-weight="normal" textLength="132" lengthAdjust="spacingAndGlyphs">56.3 Core-Hr</text>
<text x="1866.5" y="1170.8" font-size="21.5" fill="#25282b" text-anchor="end" font-weight="normal" textLength="64.5" lengthAdjust="spacingAndGlyphs">36.4%</text>
<text x="2100.4" y="1170.8" font-size="21.5" fill="#25282b" text-anchor="end" font-weight="normal" textLength="129.6" lengthAdjust="spacingAndGlyphs">33.2 GPU-Hr</text>
<text x="2331.5" y="1170.8" font-size="21.5" fill="#25282b" text-anchor="end" font-weight="normal" textLength="44.3" lengthAdjust="spacingAndGlyphs">5.1%</text>
<text x="2566.1" y="1170.8" font-size="21.5" fill="#25282b" text-anchor="end" font-weight="normal" textLength="71.2" lengthAdjust="spacingAndGlyphs">$43.65</text>
<rect x="1149.5" y="1446.5" width="46.5" height="35.5" rx="5" fill="#f3f4f4"/>
<rect x="1211" y="1446.5" width="31" height="35.5" rx="5" fill="#3b70d9"/>
<rect x="1257" y="1446.5" width="47" height="35.5" rx="5" fill="#f3f4f4"/>
<path d="M1176 1459.8 L1171.2 1464.3 L1176 1468.8" fill="none" stroke="#5a6066" stroke-width="1.7"/>
<path d="M1277.2 1459.8 L1282 1464.3 L1277.2 1468.8" fill="none" stroke="#5a6066" stroke-width="1.7"/>
<text x="1226.5" y="1469" font-size="19" fill="#ffffff" text-anchor="middle" font-weight="normal" stroke="#ffffff" stroke-width="0.3" stroke-linejoin="round">1</text>
<text x="1328" y="1468.9" font-size="18.5" fill="#50565c" text-anchor="start" font-weight="normal" textLength="124" lengthAdjust="spacing">1 - 2 of 2 rows</text>
</svg>
</body></html>
